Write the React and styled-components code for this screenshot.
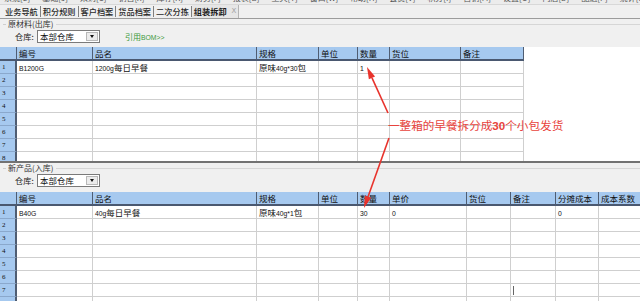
import React from 'react';
import styled, { createGlobalStyle } from 'styled-components';

const GlobalStyle = createGlobalStyle`
  *, *::before, *::after { box-sizing: border-box; }
  html, body {
    margin: 0;
    padding: 0;
    background: #f0f0f0;
    font-family: "Noto Sans CJK SC", "DejaVu Sans", sans-serif;
    font-size: 8px;
    color: #111;
  }
`;

const Page = styled.div`
  position: relative;
  width: 640px;
  height: 301px;
  overflow: hidden;
  background: #f0f0f0;
`;

const MenuStrip = styled.div`
  height: 5px;
  overflow: hidden;
  display: flex;
  gap: 12px;
  padding-left: 4px;
  background: #ececec;
  border-bottom: 1px solid #d8d8d8;
  span {
    margin-top: -7px;
    line-height: 10px;
    font-size: 8px;
    color: #555;
    white-space: nowrap;
  }
`;

const TabBar = styled.div`
  display: flex;
  align-items: center;
  height: 14px;
  padding-left: 3px;
  border-bottom: 1px solid #9c9c9c;
`;

const Tab = styled.div`
  height: 13px;
  line-height: 13px;
  padding: 0 2px;
  font-size: 8.2px;
  font-weight: ${(p) => (p.$active ? 700 : 500)};
  color: ${(p) => (p.$active ? '#1a1a1a' : '#2a2a2a')};
  background: ${(p) => (p.$active ? '#e6e6e6' : 'transparent')};
  border-right: ${(p) => (p.$active ? '1px solid #b4b4b4' : 'none')};
  white-space: nowrap;
  display: flex;
  align-items: center;
  gap: 5px;
`;

const TabSep = styled.span`
  width: 1px;
  height: 11px;
  background: #808080;
`;

const Close = styled.span`
  color: #a0a0a0;
  font-weight: 400;
  font-size: 7px;
  font-family: "DejaVu Sans", sans-serif;
`;

const Group = styled.div`
  padding-left: 3px;
`;

const GroupTitle = styled.div`
  display: flex;
  align-items: center;
  height: 10px;
  font-size: 8px;
  line-height: 10px;
  color: #333;
  &::before {
    content: '';
    width: 3px;
    border-top: 1px solid #cfcfcf;
    margin-right: 2px;
  }
  &::after {
    content: '';
    flex: 1;
    border-top: 1px solid #d6d6d6;
    margin-left: 3px;
  }
`;

const FieldRow = styled.div`
  display: flex;
  align-items: center;
  height: 14px;
  padding-left: 12px;
`;

const FieldLabel = styled.span`
  font-size: 8.2px;
  width: 22px;
  color: #222;
  white-space: nowrap;
`;

const Select = styled.div`
  width: 63px;
  height: 13px;
  background: #fff;
  border: 1px solid #7a7a7a;
  display: flex;
  align-items: center;
  font-size: 8.5px;
  line-height: 11px;
  padding-left: 2px;
  span { flex: 1; }
`;

const DropBtn = styled.div`
  width: 12px;
  height: 9px;
  margin-right: 1px;
  background: #ececec;
  border: 1px solid #b8b8b8;
  display: flex;
  align-items: center;
  justify-content: center;
  &::after {
    content: '';
    border-left: 2.5px solid transparent;
    border-right: 2.5px solid transparent;
    border-top: 3px solid #111;
  }
`;

const BomLink = styled.span`
  margin-left: 25px;
  font-size: 8px;
  color: #3c9a3c;
`;

const Lat = styled.span`
  font-family: "Liberation Sans", "DejaVu Sans", sans-serif;
  font-size: 6.8px;
`;

const GridWrap = styled.div`
  height: ${(p) => p.$h}px;
  margin-top: ${(p) => p.$top}px;
  background: #fff;
  overflow: hidden;
  border-bottom: ${(p) => (p.$bottomLine ? '2px solid #727272' : 'none')};
`;

const Grid = styled.div`
  display: grid;
  grid-template-columns: ${(p) => p.$cols};
  grid-template-rows: 14px;
  grid-auto-rows: 13px;
  width: max-content;
`;

const HeadCell = styled.div`
  background: #a6c9ef;
  border-right: 1px solid #4f5d72;
  border-bottom: 2px solid #4a5870;
  padding-left: 2px;
  font-size: 8.5px;
  line-height: 12px;
  color: #111;
  white-space: nowrap;
  overflow: hidden;
`;

const RowHead = styled.div`
  background: #a6c9ef;
  border-right: 2px solid #4f5d72;
  border-bottom: 1px solid #8aa8cc;
  font-size: 7px;
  line-height: 12px;
  padding-left: 2px;
  font-family: "Liberation Serif", serif;
  color: #111;
`;

const Cell = styled.div`
  border-right: 1px solid #cfcfcf;
  border-bottom: 1px solid #cfcfcf;
  font-size: 8.5px;
  line-height: 12px;
  padding-left: 2px;
  white-space: nowrap;
  overflow: hidden;
  color: #111;
  position: relative;
`;

const Caret = styled.span`
  position: absolute;
  left: 2px;
  top: 2px;
  width: 1px;
  height: 9px;
  background: #666;
`;

const Note = styled.div`
  position: absolute;
  left: 388px;
  top: 117px;
  font-size: 11.6px;
  line-height: 16px;
  color: #e8433c;
  white-space: nowrap;
  b {
    font-family: "Liberation Sans", sans-serif;
    font-weight: 700;
  }
`;

const Overlay = styled.svg`
  position: absolute;
  left: 0;
  top: 0;
  pointer-events: none;
`;

const topCols = '17px 76px 164px 62px 39px 32px 71px 63px';
const topHeads = ['', '编号', '品名', '规格', '单位', '数量', '货位', '备注'];
const topData = [['B1200G', '1200g每日早餐', '原味40g*30包', '', '1', '', '']];

const botCols = '17px 76px 164px 62px 39px 32px 77px 44px 45px 43px 60px';
const botHeads = ['', '编号', '品名', '规格', '单位', '数量', '单价', '货位', '备注', '分摊成本', '成本系数'];
const botData = [['B40G', '40g每日早餐', '原味40g*1包', '', '30', '0', '', '', '0', '']];

// split a cell value so latin/digit runs use the small latin face
const renderText = (s) =>
  s.split(/([A-Za-z0-9.*>]+)/).filter(Boolean).map((part, i) =>
    /^[A-Za-z0-9.*>]+$/.test(part) ? <Lat key={i}>{part}</Lat> : <span key={i}>{part}</span>
  );

const DataGrid = ({ cols, heads, data, rows, caret }) => (
  <Grid $cols={cols}>
    {heads.map((h, i) => (
      <HeadCell key={'h' + i}>{h}</HeadCell>
    ))}
    {Array.from({ length: rows }).map((_, r) => (
      <React.Fragment key={r}>
        <RowHead>{r + 1}</RowHead>
        {heads.slice(1).map((_, c) => {
          const v = (data[r] && data[r][c]) || '';
          return (
            <Cell key={c}>
              {renderText(v)}
              {caret && caret[0] === r && caret[1] === c && <Caret />}
            </Cell>
          );
        })}
      </React.Fragment>
    ))}
  </Grid>
);

const Arrow = ({ x1, y1, x2, y2 }) => {
  const dx = x2 - x1;
  const dy = y2 - y1;
  const len = Math.hypot(dx, dy);
  const ux = dx / len;
  const uy = dy / len;
  const bx = x2 - ux * 12;
  const by = y2 - uy * 12;
  const px = -uy * 3.4;
  const py = ux * 3.4;
  return (
    <g>
      <line x1={x1} y1={y1} x2={bx} y2={by} stroke="#e8332c" strokeWidth="1.6" />
      <polygon points={`${x2},${y2} ${bx + px},${by + py} ${bx - px},${by - py}`} fill="#e8332c" />
    </g>
  );
};

export default function App() {
  const menus = ['系统[S]', '基础[J]', '采购[C]', '销售[X]', '库存[K]', '财务[F]', '报表[B]', '工具[T]', '窗口[W]', '帮助[H]', '会员[V]', '积分[I]', '营销[M]', '设置[O]', '门店[D]', '配送[P]', '统计[R]'];
  return (
    <Page>
      <GlobalStyle />
      <MenuStrip>
        {menus.map((m) => (
          <span key={m}>{m}</span>
        ))}
      </MenuStrip>
      <TabBar>
        <Tab>业务导航</Tab>
        <TabSep />
        <Tab>积分规则</Tab>
        <TabSep />
        <Tab>客户档案</Tab>
        <TabSep />
        <Tab>货品档案</Tab>
        <TabSep />
        <Tab>二次分拣</Tab>
        <TabSep />
        <Tab $active>
          组装拆卸 <Close>X</Close>
        </Tab>
      </TabBar>

      <Group>
        <GroupTitle>原材料(出库)</GroupTitle>
        <FieldRow>
          <FieldLabel>仓库:</FieldLabel>
          <Select>
            <span>本部仓库</span>
            <DropBtn />
          </Select>
          <BomLink>{renderText('引用BOM>>')}</BomLink>
        </FieldRow>
      </Group>

      <GridWrap $top={4} $h={116} $bottomLine>
        <DataGrid cols={topCols} heads={topHeads} data={topData} rows={8} />
      </GridWrap>

      <Group>
        <GroupTitle>新产品(入库)</GroupTitle>
        <FieldRow>
          <FieldLabel>仓库:</FieldLabel>
          <Select>
            <span>本部仓库</span>
            <DropBtn />
          </Select>
        </FieldRow>
      </Group>

      <GridWrap $top={5} $h={110}>
        <DataGrid cols={botCols} heads={botHeads} data={botData} rows={8} caret={[6, 7]} />
      </GridWrap>

      <Note>一整箱的早餐拆分成<b>30</b>个小包发货</Note>
      <Overlay width="640" height="301">
        <Arrow x1={388} y1={113} x2={367} y2={67} />
        <Arrow x1={389} y1={138} x2={364} y2={208} />
      </Overlay>
    </Page>
  );
}
